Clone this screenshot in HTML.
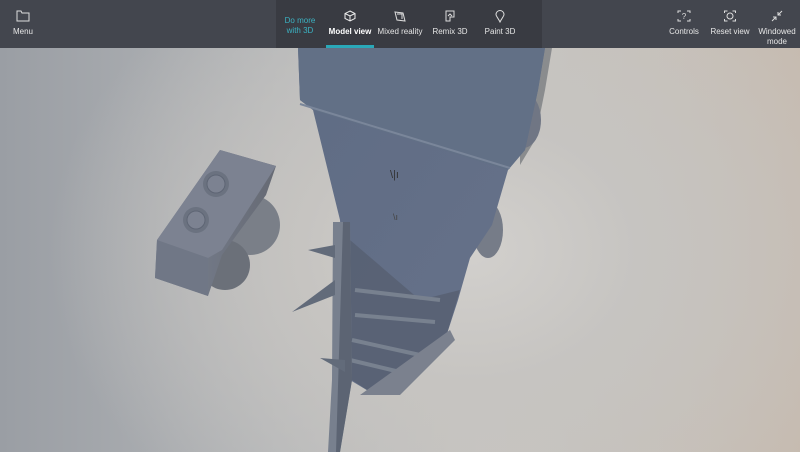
<!DOCTYPE html>
<html><head><meta charset="utf-8"><style>
*{margin:0;padding:0;box-sizing:border-box}
body{width:800px;height:452px;overflow:hidden;position:relative;font-family:"Liberation Sans",sans-serif;
background:radial-gradient(ellipse 420px 330px at 470px 250px,#d2d0cd 0%,#c6c4c1 40%,rgba(200,198,195,0) 100%),linear-gradient(90deg,#9a9ea4 0%,#b4b6b8 35%,#c8c5c1 60%,#c6bbb0 100%);}
.bar{position:absolute;left:0;top:0;width:800px;height:48px;background:#43464e;color:#e6e6e6;font-size:8px}
.it{position:absolute;top:0;height:48px;text-align:center}
.it svg{position:absolute;left:50%;top:10px;transform:translateX(-50%)}
.it span{position:absolute;left:0;right:0;top:27px;line-height:10px}
</style></head><body>
<svg width="800" height="452" style="position:absolute;left:0;top:0">
<defs>
<linearGradient id="m" x1="0" y1="0" x2="1" y2="1"><stop offset="0" stop-color="#5f6c84"/><stop offset="1" stop-color="#67728a"/></linearGradient>
<linearGradient id="b" x1="0" y1="0" x2="1" y2="0"><stop offset="0" stop-color="#7a8292"/><stop offset="1" stop-color="#666a74"/></linearGradient>
</defs>
<polygon points="520,48 552,48 545,90 535,140 520,165" fill="#8a8c8e"/>
<ellipse cx="523" cy="120" rx="18" ry="28" fill="#707684"/>
<ellipse cx="488" cy="230" rx="15" ry="28" fill="#767c88"/>
<polygon points="298,48 545,48 538,90 525,150 508,170 492,225 470,258 458,300 445,340 400,385 375,395 350,380 340,220 313,110 300,100" fill="url(#m)"/>
<polygon points="298,48 545,48 538,90 525,150 508,170 313,110 300,100" fill="#627086"/>
<polyline points="300,104 510,168" stroke="#7a869a" stroke-width="2" fill="none"/>
<polygon points="350,240 420,300 460,290 445,340 400,385 375,395 352,380" fill="#565f70" opacity=".8"/>
<path d="M355,290 L440,300 M355,315 L435,322 M352,340 L420,355 M350,360 L400,372" stroke="#78818f" stroke-width="4" fill="none"/>
<polygon points="360,395 450,330 455,340 400,395" fill="#7b818e"/>
<polygon points="333,222 350,222 352,380 340,452 328,452 332,380" fill="#78808e"/>
<polygon points="343,222 350,222 352,380 340,452 336,452" fill="#5c6473"/>
<polygon points="308,250 335,245 335,258" fill="#626b7a"/>
<polygon points="292,312 335,280 335,295" fill="#626b7a"/>
<polygon points="320,358 345,360 345,372" fill="#626b7a"/>
<text x="390" y="178" font-size="11" fill="#333" font-family="Liberation Sans">\|ı</text>
<text x="393" y="220" font-size="9" fill="#444" font-family="Liberation Sans">\ı</text>
<circle cx="250" cy="225" r="30" fill="#7a7f88"/>
<ellipse cx="225" cy="265" rx="25" ry="25" fill="#6b7079"/>
<polygon points="157,240 220,150 276,166 266,195 222,255 208,296 155,278" fill="url(#b)"/>
<polygon points="157,240 220,150 276,166 222,250 208,258" fill="#7c8291"/>
<polygon points="157,240 208,258 208,296 155,278" fill="#707786"/>
<circle cx="216" cy="184" r="13" fill="#6b7280"/><circle cx="216" cy="184" r="9" fill="#7c8291" stroke="#5e6574"/>
<circle cx="196" cy="220" r="13" fill="#6b7280"/><circle cx="196" cy="220" r="9" fill="#7c8291" stroke="#5e6574"/>
</svg>
<div class="bar">
 <div style="position:absolute;left:276px;top:0;width:266px;height:48px;background:#393b42"></div>
 <div class="it" style="left:0;width:46px"><svg width="14" height="12" viewBox="0 0 14 12"><path d="M1 1h4l1 2h7v8H1z" fill="none" stroke="#ddd"/></svg><span>Menu</span></div>
 <div class="it" style="left:276px;width:48px;color:#3bb3c3"><span style="top:16px">Do more<br>with 3D</span></div>
 <div class="it" style="left:326px;width:48px;font-weight:bold;color:#fff"><svg width="12" height="12" viewBox="0 0 12 12"><path d="M6 1l5 2.5v5L6 11 1 8.5v-5zM1 3.5L6 6l5-2.5M6 6v5" fill="none" stroke="#eee"/></svg><span>Model view</span><div style="position:absolute;left:0;bottom:0;width:48px;height:3px;background:#2aa8b8"></div></div>
 <div class="it" style="left:376px;width:48px"><svg width="12" height="12" viewBox="0 0 12 12"><path d="M1 2l8 1 2 8-8-1z M3 4h5v5" fill="none" stroke="#ddd"/></svg><span>Mixed reality</span></div>
 <div class="it" style="left:426px;width:48px"><svg width="12" height="12" viewBox="0 0 12 12"><path d="M2 1h8v6H6v4H2z M4 6l2-2 2 2" fill="none" stroke="#ddd"/></svg><span>Remix 3D</span></div>
 <div class="it" style="left:476px;width:48px"><svg width="10" height="13" viewBox="0 0 10 13"><path d="M5 12C3 8 1 6 1 4.5a4 4 0 018 0C9 6 7 8 5 12z" fill="none" stroke="#ddd"/></svg><span>Paint 3D</span></div>
 <div class="it" style="left:664px;width:40px"><svg width="14" height="12" viewBox="0 0 14 12"><path d="M1 3V1h3M10 1h3v2M13 9v2h-3M4 11H1V9" fill="none" stroke="#ddd"/><text x="7" y="9" font-size="8" fill="#ddd" text-anchor="middle" font-family="Liberation Sans">?</text></svg><span>Controls</span></div>
 <div class="it" style="left:708px;width:44px"><svg width="13" height="12" viewBox="0 0 13 12"><path d="M1 3V1h3M9 1h3v2M12 9v2H9M4 11H1V9" fill="none" stroke="#ddd"/><circle cx="6.5" cy="6" r="3" fill="none" stroke="#ddd"/></svg><span>Reset view</span></div>
 <div class="it" style="left:756px;width:42px"><svg width="12" height="12" viewBox="0 0 12 12"><path d="M11 1L7 5M7 2v3h3M1 11l4-4M2 7h3v3" fill="none" stroke="#ddd"/></svg><span>Windowed<br>mode</span></div>
</div>
</body></html>
